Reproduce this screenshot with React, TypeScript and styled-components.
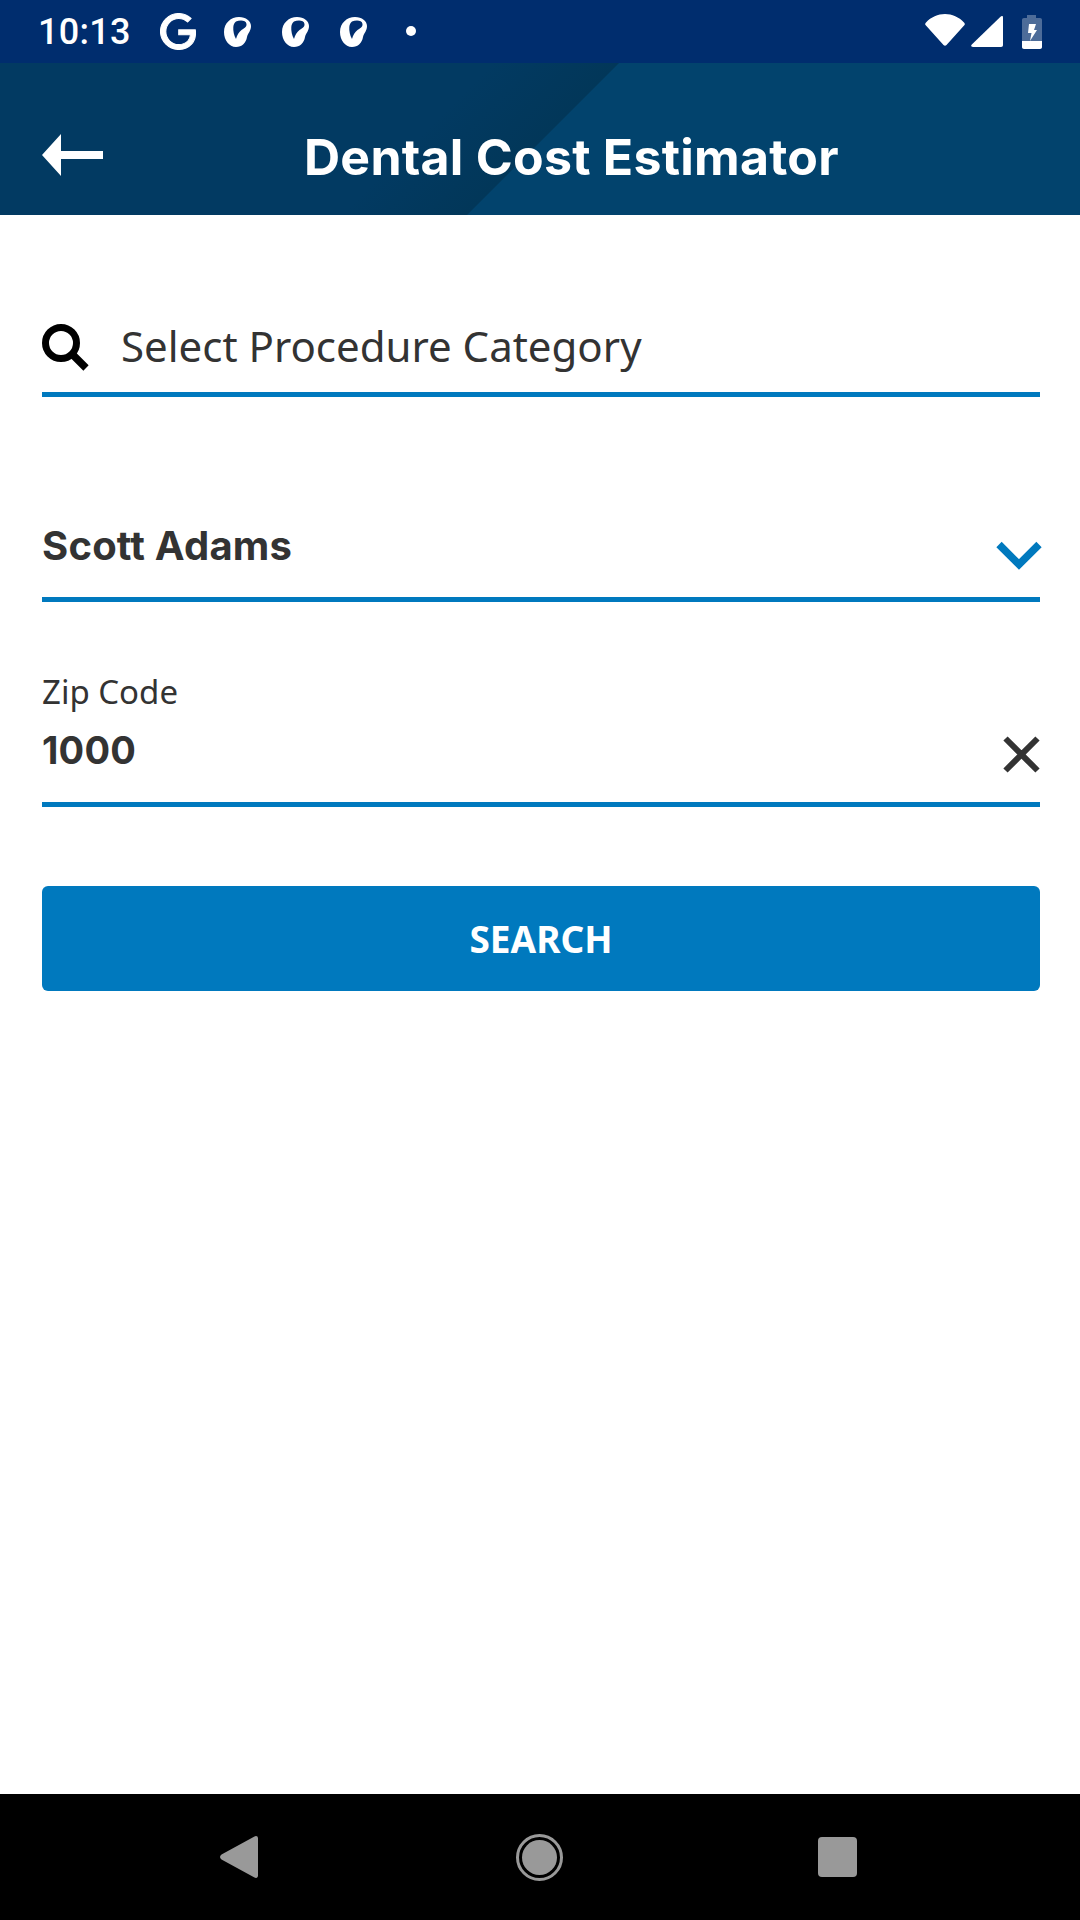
import React from "react";
import styled, { createGlobalStyle } from "styled-components";

const Global = createGlobalStyle`
  html, body { margin: 0; padding: 0; background: #fff; }
  * { box-sizing: border-box; }
`;

const Page = styled.div`
  width: 1080px;
  height: 1920px;
  display: flex;
  flex-direction: column;
  background: #fff;
`;

const StatusBar = styled.div`
  height: 63px;
  flex: none;
  display: flex;
  align-items: center;
  padding: 0 38px 0 38px;
  background: #002d6e;
`;

const Time = styled.span`
  font: 500 36px/1 Roboto, sans-serif;
  letter-spacing: 0.3px;
  color: #fff;
  width: 92px;
  margin-right: 30px;
  white-space: nowrap;
`;

const StatusLeft = styled.div`
  display: flex;
  align-items: center;
  gap: 31px;
`;

const StatusRight = styled.div`
  margin-left: auto;
  display: flex;
  align-items: center;
  gap: 6px;
`;

const GoogleGlyph = styled.svg`
  width: 36px;
  height: 37px;
  margin-right: -3px;
  fill: #fff;
  stroke: #fff;
  stroke-width: 0.7;
`;

const EarGlyph = styled.svg`
  width: 27px;
  height: 30px;
  fill: #fff;
`;

const Dot = styled.span`
  width: 10px;
  height: 10px;
  margin-left: 8px;
  margin-top: -2px;
  border-radius: 50%;
  background: #fff;
`;

const WifiGlyph = styled.svg`
  width: 40px;
  height: 32px;
  fill: #fff;
  margin-top: -3px;
`;

const SignalGlyph = styled.svg`
  width: 32px;
  height: 31px;
  fill: #fff;
`;

const BatteryGlyph = styled.svg`
  width: 20px;
  height: 34px;
  margin-left: 13px;
`;

const Header = styled.header`
  height: 152px;
  flex: none;
  display: flex;
  align-items: center;
  padding: 32px 0 0 42px;
  color: #fff;
  background: linear-gradient(
    135deg,
    #023a62 0%,
    #023a62 40%,
    #023759 50.2%,
    #02436d 50.3%,
    #02436d 100%
  );
`;

const BackGlyph = styled.svg`
  width: 61px;
  height: 42px;
  fill: #fff;
  flex: none;
`;

const Title = styled.h1`
  margin: 3px 0 0 201px;
  font: 700 50px/60px Inter, sans-serif;
  letter-spacing: 0.25px;
  color: #fff;
  white-space: nowrap;
`;

const Form = styled.main`
  flex: 1;
  padding: 100px 40px 0 42px;
  display: flex;
  flex-direction: column;
`;

const SearchRow = styled.div`
  height: 82px;
  display: flex;
  align-items: center;
  padding-bottom: 14px;
  border-bottom: 5px solid #0079be;
`;

const SearchGlyph = styled.svg`
  width: 47px;
  height: 47px;
  flex: none;
  margin: 2px 32px 0 0;
`;

const Placeholder = styled.span`
  font: 400 42px/48px "Noto Sans", sans-serif;
  color: #333;
  white-space: nowrap;
  margin-top: -2px;
`;

const SelectRow = styled.div`
  height: 85px;
  margin-top: 120px;
  display: flex;
  align-items: center;
  justify-content: space-between;
  padding-bottom: 22px;
  border-bottom: 5px solid #0079be;
`;

const StrongValue = styled.span<{ $size: number }>`
  font: 700 ${(p) => p.$size}px/48px Inter, sans-serif;
  letter-spacing: 0.2px;
  color: #333;
  white-space: nowrap;
`;

const ChevronGlyph = styled.svg`
  width: 46px;
  height: 30px;
  flex: none;
  margin: 20px -2px 0 0;
`;

const ZipField = styled.div`
  height: 135px;
  margin-top: 70px;
  display: flex;
  flex-direction: column;
  border-bottom: 5px solid #0079be;
`;

const ZipLabel = styled.label`
  font: 400 33px/40px "Noto Sans", sans-serif;
  color: #333;
`;

const ZipRow = styled.div`
  display: flex;
  align-items: center;
  justify-content: space-between;
  margin-top: 14px;
`;

const CloseGlyph = styled.svg`
  width: 37px;
  height: 37px;
  flex: none;
  margin-top: 9px;
`;

const SearchButton = styled.button`
  height: 105px;
  margin-top: 79px;
  border: 0;
  border-radius: 6px;
  background: #0079be;
  color: #fff;
  font: 700 37px/1 "Noto Sans", sans-serif;
`;

const NavBar = styled.nav`
  height: 126px;
  flex: none;
  display: flex;
  align-items: center;
  justify-content: center;
  gap: 258px;
  padding-right: 4px;
  background: #000;
`;

const NavBack = styled.svg`
  width: 38px;
  height: 42px;
  fill: #999;
`;

const NavHome = styled.span`
  width: 47px;
  height: 47px;
  border-radius: 50%;
  border: 3px solid #999;
  padding: 3px;
  display: flex;
`;

const NavHomeCore = styled.span`
  flex: 1;
  border-radius: 50%;
  background: #999;
`;

const NavSquare = styled.span`
  width: 39px;
  height: 40px;
  margin-left: -3px;
  border-radius: 4px;
  background: #999;
`;

const Ear = () => (
  <EarGlyph viewBox="0 0 27 30">
    <path
      fillRule="evenodd"
      d="M15 0C22 0 27 4 27 9C27 14 24 16 23 20C22 26 18 30 12 30C5 30 0 23 0 15C0 6 7 0 15 0ZM12 4.500C16 3 22 3 22.500 7C22.800 10.500 19.500 11.500 17.500 13C15 15 13 18 12 22C10 18.500 9 14 9.300 10C9.500 7.500 10.500 5.500 12 4.500Z"
    />
  </EarGlyph>
);

export default function App() {
  return (
    <Page>
      <Global />
      <StatusBar>
        <Time>10:13</Time>
        <StatusLeft>
          <GoogleGlyph viewBox="0 0 24 24">
            <path d="M12.48 10.92v3.28h7.84c-.24 1.84-.853 3.187-1.787 4.133-1.147 1.147-2.933 2.4-6.053 2.4-4.827 0-8.6-3.893-8.6-8.72s3.773-8.72 8.6-8.72c2.6 0 4.507 1.027 5.907 2.347l2.307-2.307C18.747 1.44 16.133 0 12.48 0 5.867 0 .307 5.387.307 12s5.56 12 12.173 12c3.573 0 6.267-1.173 8.373-3.36 2.16-2.16 2.84-5.213 2.84-7.667 0-.76-.053-1.467-.173-2.053H12.48z" />
          </GoogleGlyph>
          <Ear />
          <Ear />
          <Ear />
          <Dot />
        </StatusLeft>
        <StatusRight>
          <WifiGlyph viewBox="0 0 40 32">
            <path d="M1 8.5C6 3 13 0 20 0C27 0 34 3 39 8.500C40 9.500 40 10.500 39.500 11L21.500 31C20.500 32 19.500 32 18.500 31L.5 11C0 10.500 0 9.500 1 8.500Z" />
          </WifiGlyph>
          <SignalGlyph viewBox="0 0 32 31">
            <path d="M29.500.8C30.800-.4 32 0 32 1.500V29C32 30.300 31.300 31 30 31H2C.2 31-.5 29.800.8 28.500Z" />
          </SignalGlyph>
          <BatteryGlyph viewBox="0 0 20 34">
            <path fill="#fff" fillOpacity="0.3" d="M5 0H14V3H18C19.200 3 20 3.800 20 5V26H0V5C0 3.800.8 3 2 3H5Z" />
            <path fill="#fff" d="M0 26H20V32C20 33.200 19.200 34 18 34H2C.8 34 0 33.200 0 32Z" />
            <path fill="#fff" d="M7 9H14L12 15H15L8 26L9.500 18H6Z" />
          </BatteryGlyph>
        </StatusRight>
      </StatusBar>
      <Header>
        <BackGlyph viewBox="0 0 61 42">
          <path d="M19 0V17H61V25H19V42L0 21Z" />
        </BackGlyph>
        <Title>Dental Cost Estimator</Title>
      </Header>
      <Form>
        <SearchRow>
          <SearchGlyph viewBox="0 0 47 47" fill="none" stroke="#000">
            <circle cx="19" cy="19" r="15.500" strokeWidth="7" />
            <path d="M29 29L44 44" strokeWidth="7.500" />
          </SearchGlyph>
          <Placeholder>Select Procedure Category</Placeholder>
        </SearchRow>
        <SelectRow>
          <StrongValue $size={40}>Scott Adams</StrongValue>
          <ChevronGlyph viewBox="0 0 46 30" fill="none" stroke="#0079be" strokeWidth="7.500">
            <path d="M3 3.500L23 23.500L43 3.500" />
          </ChevronGlyph>
        </SelectRow>
        <ZipField>
          <ZipLabel>Zip Code</ZipLabel>
          <ZipRow>
            <StrongValue $size={38}>1000</StrongValue>
            <CloseGlyph viewBox="0 0 37 37" fill="none" stroke="#333" strokeWidth="6">
              <path d="M2.500 2.500L34.500 34.500M34.500 2.500L2.500 34.500" />
            </CloseGlyph>
          </ZipRow>
        </ZipField>
        <SearchButton>SEARCH</SearchButton>
      </Form>
      <NavBar>
        <NavBack viewBox="0 0 38 42">
          <path d="M34 .8C36 -.6 38 0 38 2.500V39.500C38 42 36 42.600 34 41.200L1.500 23.500C-.5 22-.5 20 1.500 18.500Z" />
        </NavBack>
        <NavHome>
          <NavHomeCore />
        </NavHome>
        <NavSquare />
      </NavBar>
    </Page>
  );
}
